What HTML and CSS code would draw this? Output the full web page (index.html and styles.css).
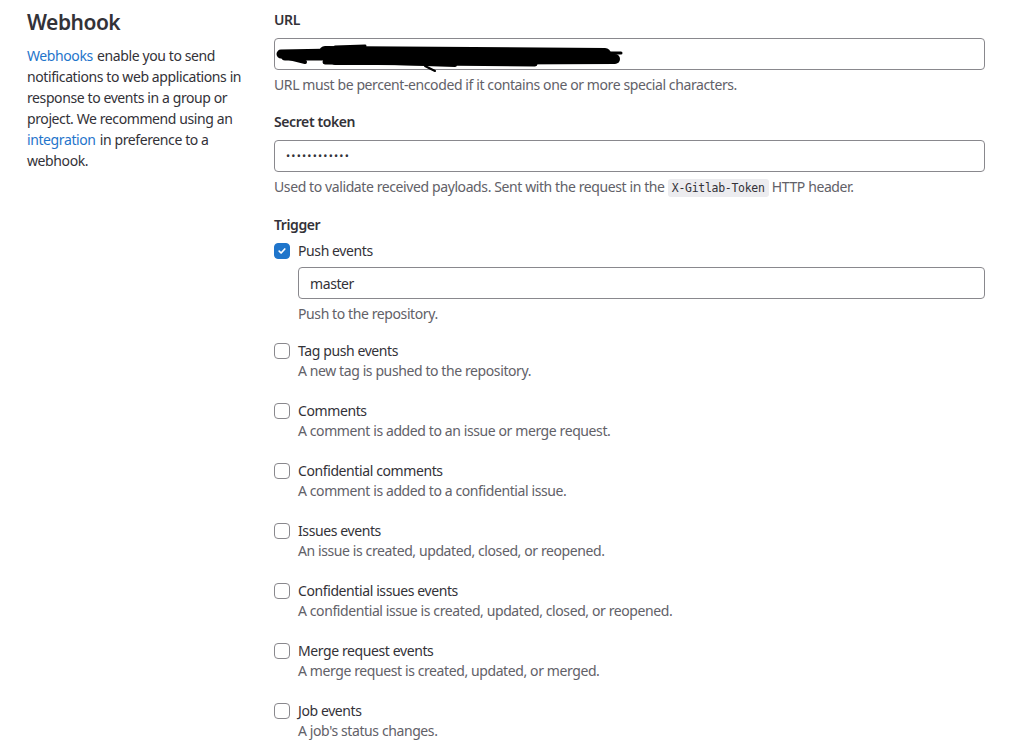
FILE: index.html
```html
<!DOCTYPE html>
<html lang="en">
<head>
<meta charset="utf-8">
<title>Webhook</title>
<link rel="stylesheet" href="styles.css">
</head>
<body>
<div class="page">
  <aside class="intro">
    <h2 class="title">Webhook</h2>
    <p class="intro-text"><a href="#">Webhooks</a> enable you to send notifications to web applications in response to events in a group or project. We recommend using an <a href="#">integration</a> in preference to a webhook.</p>
  </aside>
  <main class="form">
    <div class="group">
      <label class="label">URL</label>
      <div class="field-wrap">
        <input class="input" type="text" value="">
        <svg class="redact" width="360" height="34" viewBox="0 0 360 34">
          <g stroke="#000" stroke-linecap="round" fill="none">
            <path d="M6 14 L60 13" stroke-width="9"/>
            <path d="M10 17 L120 17" stroke-width="7"/>
            <path d="M50 12 L330 14" stroke-width="12"/>
            <path d="M60 7 L90 6" stroke-width="3"/>
            <path d="M60 20 L340 19" stroke-width="10"/>
            <path d="M50 22 L260 24" stroke-width="5"/>
            <path d="M90 22 L180 25" stroke-width="4"/>
            <path d="M330 13 L346 13" stroke-width="3"/>
            <path d="M150 26 L160 31" stroke-width="2"/>
            <path d="M6 16 L30 22" stroke-width="4"/>
          </g>
        </svg>
      </div>
      <p class="help">URL must be percent-encoded if it contains one or more special characters.</p>
    </div>
    <div class="group">
      <label class="label">Secret token</label>
      <div class="input dots">••••••••••••</div>
      <p class="help">Used to validate received payloads. Sent with the request in the <code class="code">X-Gitlab-Token</code> HTTP header.</p>
    </div>
    <div class="group">
      <label class="label trigger-label">Trigger</label>
      <div class="item item-push">
        <div class="check-row">
          <span class="box checked"><svg width="10" height="10" viewBox="0 0 10 10"><path d="M2.2 5.2 L4.1 7 L7.8 3" fill="none" stroke="#fff" stroke-width="1.7" stroke-linecap="round" stroke-linejoin="round"/></svg></span>
          <span class="check-label">Push events</span>
        </div>
        <div class="indent">
          <input class="input branch" type="text" value="master">
          <p class="help">Push to the repository.</p>
        </div>
      </div>
      <div class="item">
        <div class="check-row"><span class="box"></span><span class="check-label">Tag push events</span></div>
        <p class="desc">A new tag is pushed to the repository.</p>
      </div>
      <div class="item">
        <div class="check-row"><span class="box"></span><span class="check-label">Comments</span></div>
        <p class="desc">A comment is added to an issue or merge request.</p>
      </div>
      <div class="item">
        <div class="check-row"><span class="box"></span><span class="check-label">Confidential comments</span></div>
        <p class="desc">A comment is added to a confidential issue.</p>
      </div>
      <div class="item">
        <div class="check-row"><span class="box"></span><span class="check-label">Issues events</span></div>
        <p class="desc">An issue is created, updated, closed, or reopened.</p>
      </div>
      <div class="item">
        <div class="check-row"><span class="box"></span><span class="check-label">Confidential issues events</span></div>
        <p class="desc">A confidential issue is created, updated, closed, or reopened.</p>
      </div>
      <div class="item">
        <div class="check-row"><span class="box"></span><span class="check-label">Merge request events</span></div>
        <p class="desc">A merge request is created, updated, or merged.</p>
      </div>
      <div class="item">
        <div class="check-row"><span class="box"></span><span class="check-label">Job events</span></div>
        <p class="desc">A job's status changes.</p>
      </div>
    </div>
  </main>
</div>
</body>
</html>
```
FILE: styles.css
```css
* { box-sizing: border-box; }
html, body { margin: 0; padding: 0; background: #fff; }
body {
  font-family: "Noto Sans", "Open Sans", sans-serif;
  font-size: 14px;
  line-height: 20px;
  color: #333238;
  overflow: hidden;
  letter-spacing: -0.4px;
}
.page {
  display: grid;
  grid-template-columns: 220px 1fr;
  column-gap: 27px;
  padding: 10px 27px 0 27px;
}
.title {
  margin: -2px 0 0 0;
  font-size: 21px;
  line-height: 28px;
  font-weight: 600;
  color: #333238;
  letter-spacing: -0.5px;
}
.intro-text {
  margin: 9px 0 0 0;
  line-height: 21px;
}
a { color: #1f75cb; text-decoration: none; margin-right: 1px; }
.group { margin-bottom: 17px; }
.label {
  display: block;
  font-weight: 600;
  margin-bottom: 8px;
}
.trigger-label { margin-bottom: 6px; margin-top: 1px; }
.field-wrap { position: relative; }
.input {
  display: block;
  width: 100%;
  height: 32px;
  border: 1px solid #89888d;
  border-radius: 4px;
  padding: 0 11px;
  font: inherit;
  letter-spacing: -0.4px;
  color: #333238;
  background: #fff;
  outline: none;
}
.dots {
  line-height: 30px;
  font-size: 11px;
  letter-spacing: 1.2px;
}
.redact {
  position: absolute;
  left: 1px;
  top: 2px;
}
.help {
  margin: 5px 0 0 0;
  color: #626168;
}
.code {
  font-family: "DejaVu Sans Mono", "Liberation Mono", monospace;
  font-size: 11.5px;
  letter-spacing: -0.3px;
  background: #ececef;
  border-radius: 3px;
  padding: 2px 4px;
  color: #333238;
}
.item { margin-bottom: 20px; }
.item-push { margin-bottom: 17px; }
.check-row {
  display: flex;
  align-items: center;
  gap: 8px;
  height: 20px;
}
.box {
  width: 16px;
  height: 16px;
  border: 1px solid #89888d;
  border-radius: 4px;
  background: #fff;
  display: flex;
  align-items: center;
  justify-content: center;
  flex: none;
}
.box.checked { background: #1f75cb; border-color: #1f75cb; }
.indent { padding-left: 24px; }
.branch { margin-top: 6px; }
.desc {
  margin: 0 0 0 24px;
  color: #626168;
}
```
